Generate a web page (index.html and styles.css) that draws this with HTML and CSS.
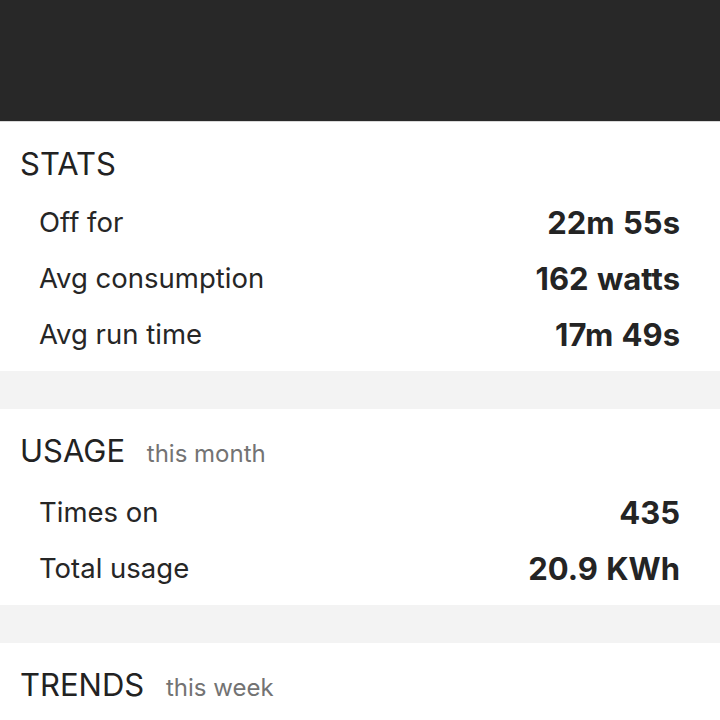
FILE: index.html
```html
<!DOCTYPE html>
<html>
<head>
<meta charset="utf-8">
<link rel="stylesheet" href="styles.css">
</head>
<body>
<div class="topbar"></div>
<section class="card">
  <h2 class="card-title">STATS</h2>
  <div class="row"><span class="label">Off for</span><span class="value">22m 55s</span></div>
  <div class="row"><span class="label">Avg consumption</span><span class="value">162 watts</span></div>
  <div class="row"><span class="label">Avg run time</span><span class="value">17m 49s</span></div>
</section>
<div class="divider"></div>
<section class="card">
  <h2 class="card-title">USAGE <span class="sub">this month</span></h2>
  <div class="row"><span class="label">Times on</span><span class="value">435</span></div>
  <div class="row"><span class="label">Total usage</span><span class="value">20.9 KWh</span></div>
</section>
<div class="divider"></div>
<section class="card">
  <h2 class="card-title">TRENDS <span class="sub">this week</span></h2>
</section>
</body>
</html>
```
FILE: styles.css
```css
html, body {
  margin: 0;
  padding: 0;
  background: #ffffff;
  font-family: Inter, Lato, sans-serif;
  color: #262626;
  overflow: hidden;
}
.topbar {
  height: 121px;
  background: #282828;
  border-bottom: 1px solid #d8d8d8;
}
.card {
  padding: 22px 40px 9px 20px;
}
.card-title {
  margin: 0 0 10px 0;
  font-size: 31px;
  line-height: 40px;
  font-weight: 400;
  color: #222;
}
.sub {
  font-size: 24px;
  color: #737373;
  margin-left: 13px;
}
.row {
  display: flex;
  justify-content: space-between;
  align-items: center;
  height: 56px;
  padding-left: 19px;
}
.label {
  font-size: 27.5px;
  color: #262626;
}
.value {
  font-size: 31px;
  font-weight: 700;
  color: #242424;
  word-spacing: 1px;
}
.divider {
  height: 38px;
  background: #f3f3f3;
}
```
